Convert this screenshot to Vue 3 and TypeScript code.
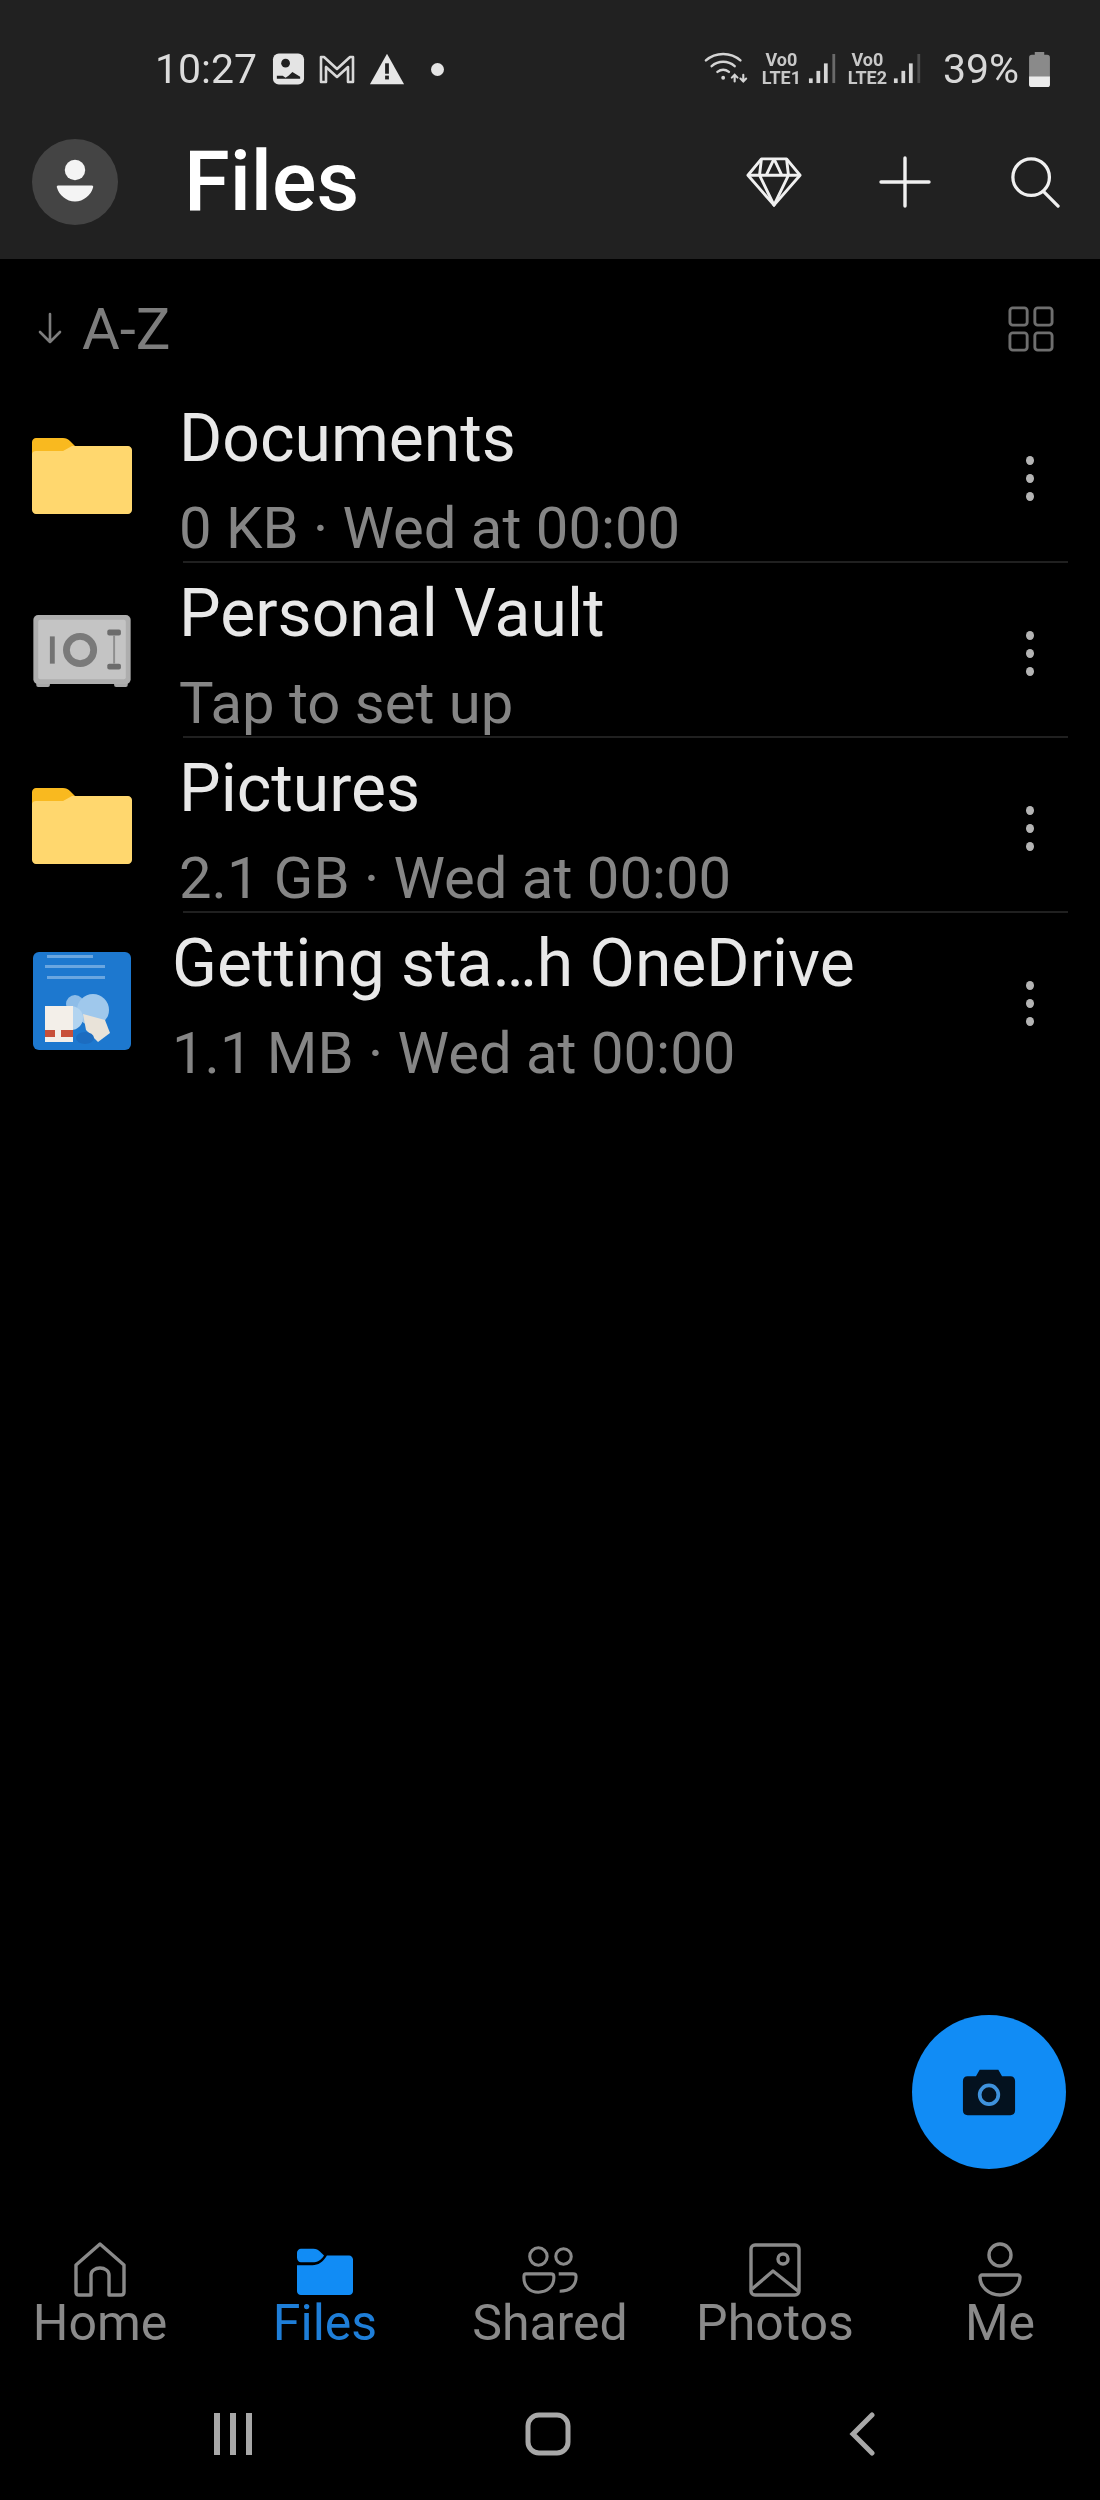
<script setup lang="ts">
interface FileRow {
  name: string
  meta: string
  kind: 'folder' | 'vault' | 'doc'
}

const rows: FileRow[] = [
  { name: 'Documents', meta: '0 KB · Wed at 00:00', kind: 'folder' },
  { name: 'Personal Vault', meta: 'Tap to set up', kind: 'vault' },
  { name: 'Pictures', meta: '2.1 GB · Wed at 00:00', kind: 'folder' },
  { name: 'Getting sta…h OneDrive', meta: '1.1 MB · Wed at 00:00', kind: 'doc' },
]
</script>

<template>
  <div class="phone">
    <header class="top">
      <div class="status">
        <div class="status-left">
          <span class="time">10:27</span>
          <svg class="si" width="33" height="34" viewBox="0 0 34 34">
            <rect x="1" y="1" width="32" height="32" rx="6" fill="#e4e4e4" />
            <circle cx="14" cy="11" r="4.5" fill="#212121" />
            <path d="M5 24h6l3 2 3-2 4-4 8 5v2H5z" fill="#212121" />
          </svg>
          <svg class="si" width="38" height="32" viewBox="0 0 38 32" fill="none" stroke="#d8d8d8">
            <path d="M3 29V4h3l13 12L32 4h3v25h-5V14l-11 10L8 14v15z" stroke-width="2.6" stroke-linejoin="round" />
          </svg>
          <svg class="si" width="36" height="34" viewBox="0 0 38 34">
            <path d="M19 1L37 33H1z" fill="#e6e6e6" />
            <rect x="17" y="11" width="4" height="11" fill="#212121" />
            <rect x="17" y="24" width="4" height="4" fill="#212121" />
          </svg>
          <span class="dot"></span>
        </div>
        <div class="status-right">
          <svg class="wifi" width="46" height="36" viewBox="0 0 48 36" fill="none" stroke="#d4d4d4" stroke-width="2.6" stroke-linecap="round">
            <path d="M2 9C12 0 28 0 38 9" />
            <path d="M8 15c7-6 17-6 24 0" />
            <path d="M14 21c4-3 8-3 12 0" />
            <path d="M20 27v.1" stroke-width="4" />
            <path d="M32 31v-7M29 27l3-3 3 3M41 24v7M38 28l3 3 3-3" stroke-width="2.2" />
          </svg>
          <span class="lte"><span>Vo0</span><span>LTE1</span></span>
          <svg class="signal" width="30" height="36" viewBox="0 0 32 36">
            <rect x="1" y="28" width="4" height="5" fill="#d6d6d6" />
            <rect x="9" y="20" width="4" height="13" fill="#d6d6d6" />
            <rect x="17" y="12" width="4" height="21" fill="#d6d6d6" />
            <rect x="26" y="2" width="3" height="31" fill="#6a6a6a" />
          </svg>
          <span class="lte second"><span>Vo0</span><span>LTE2</span></span>
          <svg class="signal" width="30" height="36" viewBox="0 0 32 36">
            <rect x="1" y="28" width="4" height="5" fill="#d6d6d6" />
            <rect x="9" y="20" width="4" height="13" fill="#d6d6d6" />
            <rect x="17" y="12" width="4" height="21" fill="#d6d6d6" />
            <rect x="26" y="2" width="3" height="31" fill="#4c4c4c" />
          </svg>
          <span class="pct">39%</span>
          <svg width="21" height="36" viewBox="0 0 22 38">
            <path d="M6 1h10v3h3a3 3 0 0 1 3 3v28a3 3 0 0 1-3 3H3a3 3 0 0 1-3-3V7a3 3 0 0 1 3-3h3z" fill="#8a8a8a" />
            <path d="M0 27h22v8a3 3 0 0 1-3 3H3a3 3 0 0 1-3-3z" fill="#ececec" />
          </svg>
        </div>
      </div>
      <div class="title-bar">
        <div class="avatar">
          <svg width="40" height="46" viewBox="0 0 46 54">
            <circle cx="23" cy="13" r="12" fill="#f4f4f4" />
            <path d="M3 31h40c1 0 2 1 1 3-2 8-11 16-21 16S4 42 2 34c-1-2 0-3 1-3z" fill="#f4f4f4" />
          </svg>
        </div>
        <h1 class="title">Files</h1>
        <div class="actions">
          <svg class="a-diamond" width="56" height="54" viewBox="0 0 58 54" fill="none" stroke="#f0f0f0" stroke-width="3" stroke-linejoin="round">
            <path d="M16 3h26l14 17-27 31L2 20z" />
            <path d="M2 20h54M16 3l-2 17 15 31 15-31-2-17M29 3l-8 17M29 3l8 17" />
          </svg>
          <svg class="a-plus" width="52" height="52" viewBox="0 0 52 52" stroke="#f0f0f0" stroke-width="3.4" stroke-linecap="round">
            <path d="M26 2v48M2 26h48" />
          </svg>
          <svg class="a-search" width="50" height="52" viewBox="0 0 52 54" fill="none" stroke="#f0f0f0" stroke-width="3.4" stroke-linecap="round">
            <circle cx="22" cy="22" r="19" />
            <path d="M35 37l15 15" />
          </svg>
        </div>
      </div>
    </header>

    <main class="content">
      <div class="sort">
        <div class="sort-left">
          <svg width="28" height="40" viewBox="0 0 28 40" fill="none" stroke="#7d7d7d" stroke-width="2.6" stroke-linecap="round" stroke-linejoin="round">
            <path d="M14 5v28M4 23l10 10 10-10" />
          </svg>
          <span class="az">A-Z</span>
        </div>
        <svg width="46" height="46" viewBox="0 0 48 48" fill="none" stroke="#6e6e6e" stroke-width="3">
          <rect x="2" y="2" width="18" height="18" rx="3" />
          <rect x="28" y="2" width="18" height="18" rx="3" />
          <rect x="2" y="28" width="18" height="18" rx="3" />
          <rect x="28" y="28" width="18" height="18" rx="3" />
        </svg>
      </div>

      <ul class="list">
        <li v-for="(row, i) in rows" :key="row.name" class="row">
          <div class="row-icon">
            <svg v-if="row.kind === 'folder'" width="100" height="76" viewBox="0 0 100 76">
              <path d="M4 0h27c3 0 5 1 7 3l7 7v10H0V4c0-2 2-4 4-4z" fill="#f9b91f" />
              <path d="M0 16c0-2 2-3 4-3h27l9-5h56c2 0 4 2 4 4v60c0 2-2 4-4 4H4c-2 0-4-2-4-4z" fill="#ffd76e" />
            </svg>
            <svg v-else-if="row.kind === 'vault'" width="98" height="72" viewBox="0 0 100 74">
              <rect x="3" y="68" width="14" height="6" rx="2" fill="#a8a8a8" />
              <rect x="83" y="68" width="14" height="6" rx="2" fill="#a8a8a8" />
              <rect width="100" height="71" rx="5" fill="#aeaeae" />
              <rect x="5" y="5" width="90" height="61" rx="2" fill="#c4c4c4" />
              <rect x="17" y="22" width="5" height="28" fill="#737373" />
              <circle cx="48" cy="36" r="14" fill="none" stroke="#7a7a7a" stroke-width="7" />
              <rect x="76" y="15" width="14" height="6" rx="2" fill="#6c6c6c" />
              <rect x="76" y="50" width="14" height="6" rx="2" fill="#6c6c6c" />
              <rect x="82" y="21" width="2" height="29" fill="#8e8e8e" />
            </svg>
            <svg v-else width="98" height="98" viewBox="0 0 98 98">
              <rect width="98" height="98" rx="6" fill="#1d78cf" />
              <g fill="#6aa6e0">
                <rect x="14" y="3" width="46" height="3" />
                <rect x="12" y="13" width="60" height="3" />
                <rect x="14" y="24" width="58" height="3" />
              </g>
              <circle cx="42" cy="52" r="9" fill="#8ebde8" />
              <circle cx="60" cy="58" r="16" fill="#9fc8ec" />
              <circle cx="38" cy="66" r="12" fill="#b2d4f0" />
              <rect x="12" y="54" width="28" height="36" fill="#f3efe9" />
              <rect x="12" y="78" width="10" height="7" fill="#c8503a" />
              <rect x="28" y="78" width="12" height="7" fill="#c8503a" />
              <path d="M50 62l22 6 5 13-12 9-12-12z" fill="#e9e3d9" />
              <ellipse cx="52" cy="86" rx="9" ry="6" fill="#1c6cc0" />
            </svg>
          </div>
          <div class="row-main" :class="{ last: i === rows.length - 1 }">
            <div class="row-text" :class="{ doc: row.kind === 'doc' }">
              <div class="name">{{ row.name }}</div>
              <div class="meta">{{ row.meta }}</div>
            </div>
            <div class="kebab"><i></i><i></i><i></i></div>
          </div>
        </li>
      </ul>

      <button class="fab" type="button" aria-label="Camera">
        <svg width="54" height="50" viewBox="0 0 58 52">
          <path d="M19 2h20l4 7h9c3 0 5 2 5 5v32c0 3-2 5-5 5H6c-3 0-5-2-5-5V14c0-3 2-5 5-5h9z" fill="#04121f" />
          <circle cx="29" cy="29" r="10" fill="none" stroke="#3f92dc" stroke-width="4" />
        </svg>
      </button>
    </main>

    <nav class="tabs">
      <div class="tab">
        <svg width="52" height="56" viewBox="0 0 52 56" fill="none" stroke="#8a8a8a" stroke-width="3.4" stroke-linejoin="round">
          <path d="M2 23L26 2l24 21v27c0 2-1 3-3 3H35V33c0-4-4-7-9-7s-9 3-9 7v20H5c-2 0-3-1-3-3z" />
        </svg>
        <span>Home</span>
      </div>
      <div class="tab active">
        <svg width="56" height="56" viewBox="0 -6 58 56">
          <path d="M4 0h13c3 0 5 1 7 3l4 4c-3 5-7 7-12 7H4c-2 0-4-2-4-5V4c0-2 2-4 4-4z" fill="#118cf5" />
          <path d="M0 17h16c6 0 11-3 15-10h23c2 0 4 2 4 4v33c0 2-2 4-4 4H4c-2 0-4-2-4-4z" fill="#118cf5" />
        </svg>
        <span>Files</span>
      </div>
      <div class="tab">
        <svg width="56" height="56" viewBox="0 -3 58 56" fill="none" stroke="#8a8a8a" stroke-width="3.2">
          <circle cx="17" cy="11" r="9" />
          <circle cx="43" cy="11" r="8" />
          <path d="M4 29h26c2 0 3 1 3 3v1c0 9-7 15-16 15S2 42 2 33v-1c0-2 1-3 2-3z" />
          <path d="M38 29h15c2 0 3 1 3 3 0 9-6 15-17 15" />
        </svg>
        <span>Shared</span>
      </div>
      <div class="tab">
        <svg width="52" height="54" viewBox="0 0 52 54" fill="none" stroke="#8a8a8a" stroke-width="3.4" stroke-linejoin="round">
          <rect x="2" y="2" width="48" height="50" rx="4" />
          <circle cx="34" cy="16" r="5" />
          <path d="M3 46l21-18 25 20" />
        </svg>
        <span>Photos</span>
      </div>
      <div class="tab">
        <svg width="44" height="56" viewBox="0 0 44 56" fill="none" stroke="#8a8a8a" stroke-width="3.4">
          <circle cx="22" cy="13" r="11" />
          <path d="M4 33h36c1 0 2 1 2 2 0 10-9 18-20 18S2 45 2 35c0-1 1-2 2-2z" />
        </svg>
        <span>Me</span>
      </div>
    </nav>

    <div class="sys">
      <svg class="sys-recent" width="42" height="44" viewBox="0 0 42 44" fill="#a8a8a8">
        <rect x="2" y="1" width="6" height="42" />
        <rect x="18" y="1" width="6" height="42" />
        <rect x="34" y="1" width="6" height="42" />
      </svg>
      <svg class="sys-home" width="46" height="44" viewBox="0 0 46 44" fill="none" stroke="#a8a8a8" stroke-width="5">
        <rect x="3" y="3" width="40" height="38" rx="11" />
      </svg>
      <svg class="sys-back" width="28" height="44" viewBox="0 0 28 44" fill="none" stroke="#a8a8a8" stroke-width="5" stroke-linecap="round">
        <path d="M24 3L5 22l19 19" />
      </svg>
    </div>
  </div>
</template>

<style>
html,
body {
  margin: 0;
  background: #000;
}
</style>

<style scoped>
.phone {
  width: 1100px;
  height: 2500px;
  display: flex;
  flex-direction: column;
  background: #000;
  font-family: Roboto, "Liberation Sans", sans-serif;
  overflow: hidden;
  filter: blur(0.7px);
}

.top {
  height: 259px;
  flex: none;
  background: #212121;
  display: flex;
  flex-direction: column;
}

.status {
  height: 136px;
  padding: 2px 50px 0 155px;
  box-sizing: border-box;
  display: flex;
  justify-content: space-between;
  align-items: center;
}

.status-left,
.status-right {
  display: flex;
  align-items: center;
}

.time {
  font-size: 41px;
  color: #dcdcdc;
  margin-right: 15px;
}

.si {
  margin-right: 13px;
}

.dot {
  width: 13px;
  height: 13px;
  border-radius: 50%;
  background: #e4e4e4;
  margin-left: 13px;
}

.lte {
  width: 43px;
  display: flex;
  flex-direction: column;
  align-items: center;
  font-size: 18px;
  line-height: 18px;
  font-weight: 700;
  color: #c8c8c8;
  margin: 0 5px 0 10px;
}

.lte.second {
  margin: 0 4px 0 8px;
}

.pct {
  font-size: 41px;
  color: #d8d8d8;
  margin: 0 10px 0 20px;
}

.title-bar {
  flex: 1;
  display: flex;
  align-items: center;
  padding: 0 40px 14px 32px;
  margin-top: -18px;
}

.avatar {
  width: 86px;
  height: 86px;
  border-radius: 50%;
  background: #444;
  display: flex;
  align-items: center;
  justify-content: center;
}

.title {
  margin: 0 0 0 66px;
  font-size: 83px;
  font-weight: 500;
  color: #fff;
  line-height: 90px;
}

.actions {
  margin-left: auto;
  display: flex;
  align-items: center;
}

.a-diamond {
  margin-right: 77px;
}

.a-plus {
  margin-right: 79px;
}

.content {
  flex: 1;
  position: relative;
}

.sort {
  height: 129px;
  box-sizing: border-box;
  padding: 10px 46px 0 36px;
  display: flex;
  align-items: center;
  justify-content: space-between;
}

.sort-left {
  display: flex;
  align-items: center;
  gap: 18px;
}

.az {
  font-size: 58px;
  color: #7d7d7d;
}

.list {
  list-style: none;
  margin: 0;
  padding: 0;
}

.row {
  height: 175px;
  display: flex;
  padding: 0 32px;
}

.row-icon {
  width: 100px;
  flex: none;
  display: flex;
  align-items: center;
  justify-content: center;
}

.row-main {
  flex: 1;
  margin-left: 51px;
  display: flex;
  justify-content: space-between;
  border-bottom: 2px solid #202020;
}

.row-main.last {
  border-bottom-color: transparent;
}

.row-text {
  padding-top: 9px;
  margin-left: -4px;
}

.row-text.doc {
  margin-left: -11px;
}

.name {
  font-size: 66px;
  line-height: 84px;
  color: #e8e8e8;
}

.meta {
  font-size: 58px;
  line-height: 64px;
  margin-top: 15px;
  color: #858585;
  white-space: nowrap;
}

.kebab {
  width: 76px;
  padding-top: 8px;
  display: flex;
  flex-direction: column;
  align-items: center;
  justify-content: center;
  gap: 9px;
}

.kebab i {
  width: 8px;
  height: 9px;
  border-radius: 50%;
  background: #b4b4b4;
}

.fab {
  position: absolute;
  right: 34px;
  bottom: 71px;
  width: 154px;
  height: 154px;
  border: 0;
  padding: 0;
  border-radius: 50%;
  background: #118cf5;
  display: flex;
  align-items: center;
  justify-content: center;
}

.tabs {
  flex: none;
  height: 128px;
  margin: 0 -12.5px;
  display: grid;
  grid-template-columns: repeat(5, 225px);
}

.tab {
  display: flex;
  flex-direction: column;
  align-items: center;
  height: 128px;
  padding-top: 2px;
  box-sizing: border-box;
}

.tab svg {
  height: 56px;
  flex: none;
}

.tab span {
  font-size: 50px;
  line-height: 58px;
  margin-top: -4px;
  color: #8a8a8a;
}

.tab.active span {
  color: #1e7ed8;
}

.sys {
  flex: none;
  height: 132px;
  display: flex;
  align-items: center;
  padding-left: 212px;
}

.sys-recent {
  margin-right: 271px;
}

.sys-home {
  margin-right: 277px;
}
</style>
